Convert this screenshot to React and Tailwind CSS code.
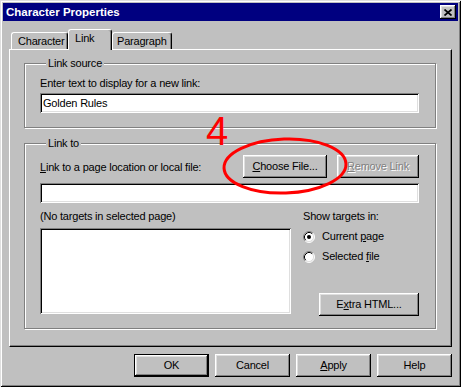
import React from "react";

const RAISED =
  "shadow-[inset_-1px_-1px_#000,inset_1px_1px_#fff,inset_-2px_-2px_#808080,inset_2px_2px_#dfdfdf]";
const SUNKEN =
  "shadow-[inset_1px_1px_#808080,inset_-1px_-1px_#fff,inset_2px_2px_#000,inset_-2px_-2px_#dfdfdf]";
const ETCHED = "border border-[#808080] shadow-[inset_1px_1px_#fff,1px_1px_#fff]";

function Btn({ children, className = "", isDefault = false, disabled = false }) {
  return (
    <div
      className={
        "h-[23px] bg-[#c0c0c0] flex items-center justify-center shrink-0 " +
        (isDefault ? "border border-black " : "") +
        (disabled ? "text-[#808080] [text-shadow:1px_1px_#fff] " : "text-black ") +
        className
      }
    >
      <div className={"w-full h-full flex items-center justify-center " + RAISED}>{children}</div>
    </div>
  );
}

function U({ children }) {
  return <span className="underline decoration-1 underline-offset-[1px]">{children}</span>;
}

function Radio({ checked }) {
  return (
    <svg width="12" height="12" viewBox="0 0 12 12" className="shrink-0">
      <circle cx="6" cy="6" r="5" fill="#fff" />
      <path d="M2.11 9.89A5.5 5.5 0 0 1 9.89 2.11" stroke="#808080" fill="none" />
      <path d="M9.89 2.11A5.5 5.5 0 0 1 2.11 9.89" stroke="#fff" fill="none" />
      <path d="M2.82 9.18A4.5 4.5 0 0 1 9.18 2.82" stroke="#000" fill="none" />
      <path d="M9.18 2.82A4.5 4.5 0 0 1 2.82 9.18" stroke="#dfdfdf" fill="none" />
      {checked && <circle cx="6" cy="6" r="2" fill="#000" />}
    </svg>
  );
}

function GroupLabel({ children }) {
  return (
    <span className="-mt-[7px] ml-[6px] px-[2px] w-fit h-[13px] leading-[13px] bg-[#c0c0c0] relative">
      {children}
    </span>
  );
}

export default function App() {
  return (
    <div className="relative w-[461px] h-[387px] bg-[#c0c0c0] p-[3px] flex flex-col font-['Liberation_Sans',Arial,sans-serif] text-[11px] tracking-[-0.2px] text-black leading-[13px] shadow-[inset_1px_1px_#dfdfdf,inset_-1px_-1px_#000,inset_2px_2px_#fff,inset_-2px_-2px_#808080]">
      {/* Title bar */}
      <div className="h-[18px] bg-[#000080] flex items-center justify-between pl-[3px] pr-[2px] shrink-0">
        <span className="text-white font-bold text-[11.5px] tracking-normal">Character Properties</span>
        <div className={"w-[16px] h-[14px] bg-[#c0c0c0] flex items-center justify-center " + RAISED}>
          <svg width="8" height="7" viewBox="0 0 8 7">
            <path d="M0.5 0.5L7.5 6.5M7.5 0.5L0.5 6.5" stroke="#000" strokeWidth="1.7" />
          </svg>
        </div>
      </div>

      {/* Tabs */}
      <div className="mt-[8px] mx-[6px] flex items-end pl-[2px] h-[20px]">
        <div className="h-[17px] w-[57px] pl-[6px] flex items-center border-l border-t border-white border-r border-r-black rounded-tl-[3px] rounded-tr-[3px] shadow-[inset_-1px_0_#808080]">
          Character
        </div>
        <div className="relative z-10 h-[21px] -mb-[1px] w-[44px] pl-[6px] pb-[3px] flex items-center bg-[#c0c0c0] border-l border-t border-white border-r border-r-black rounded-tl-[3px] rounded-tr-[3px] shadow-[inset_-1px_0_#808080]">
          Link
        </div>
        <div className="h-[17px] w-[60px] pl-[4px] flex items-center border-l border-t border-white border-r border-r-black rounded-tl-[3px] rounded-tr-[3px] shadow-[inset_-1px_0_#808080]">
          Paragraph
        </div>
      </div>

      {/* Panel */}
      <div className="mx-[6px] h-[298px] border border-t-white border-l-white border-r-black border-b-black shadow-[inset_-1px_-1px_#808080] pt-[13px] pl-[14px] pr-[14px] flex flex-col">
        {/* Link source */}
        <div className={"flex flex-col w-[412px] pl-[15px] pr-[16px] pb-[14px] " + ETCHED}>
          <GroupLabel>Link source</GroupLabel>
          <div className="mt-[7px] h-[13px]">Enter text to display for a new link:</div>
          <div className={"mt-[3px] h-[20px] bg-white flex items-center pl-[3px] " + SUNKEN}>Golden Rules</div>
        </div>

        {/* Link to */}
        <div className={"mt-[15px] flex flex-col w-[412px] pl-[15px] pr-[16px] pb-[12px] " + ETCHED}>
          <GroupLabel>Link to</GroupLabel>
          <div className="mt-[5px] h-[23px] flex items-start">
            <div className="mt-[6px] flex-1">
              <U>L</U>ink to a page location or local file:
            </div>
            <Btn className="w-[84px]">
              <U>C</U>hoose File...
            </Btn>
            <Btn className="w-[82px] ml-[10px]" disabled>
              <U>R</U>emove Link
            </Btn>
          </div>
          <div className={"mt-[5px] h-[20px] bg-white " + SUNKEN}></div>
          <div className="mt-[7px] flex">
            <div className="w-[251px] flex flex-col">
              <div className="h-[13px]">(No targets in selected page)</div>
              <div className={"mt-[5px] h-[86px] bg-white " + SUNKEN}></div>
            </div>
            <div className="ml-[12px] flex-1 flex flex-col">
              <div className="h-[13px]">Show targets in:</div>
              <div className="mt-[7px] h-[13px] flex items-center gap-[7px]">
                <Radio checked />
                <span>
                  Current <U>p</U>age
                </span>
              </div>
              <div className="mt-[7px] h-[13px] flex items-center gap-[7px]">
                <Radio />
                <span>
                  Selected <U>f</U>ile
                </span>
              </div>
              <Btn className="mt-[30px] w-[100px] self-end">
                E<U>x</U>tra HTML...
              </Btn>
            </div>
          </div>
        </div>
      </div>

      {/* Bottom buttons */}
      <div className="mt-[7px] mx-[6px] flex justify-end gap-[6px]">
        <Btn className="w-[75px]" isDefault>
          OK
        </Btn>
        <Btn className="w-[75px]">Cancel</Btn>
        <Btn className="w-[75px]">
          <U>A</U>pply
        </Btn>
        <Btn className="w-[75px]">Help</Btn>
      </div>

      {/* Red annotation overlay */}
      <div className="absolute left-[206px] top-[111px] text-[40px] leading-[40px] text-[#ff0000] tracking-normal">4</div>
      <svg className="absolute left-[221px] top-[135px]" width="128" height="62" viewBox="0 0 128 62">
        <ellipse cx="64" cy="31" rx="61" ry="27" fill="none" stroke="#ff0000" strokeWidth="3" transform="rotate(-2 64 31)" />
      </svg>
    </div>
  );
}
